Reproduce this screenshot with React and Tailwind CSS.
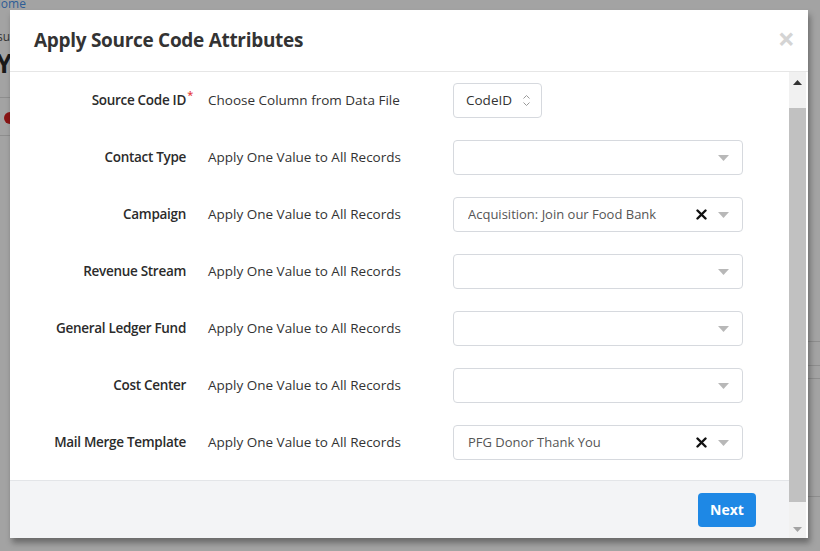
import React from 'react';

const rows = [
   { label: 'Source Code ID', required: true, mode: 'Choose Column from Data File', kind: 'code', value: 'CodeID' },
   { label: 'Contact Type', mode: 'Apply One Value to All Records', kind: 'select', value: '' },
   { label: 'Campaign', mode: 'Apply One Value to All Records', kind: 'select', value: 'Acquisition: Join our Food Bank' },
   { label: 'Revenue Stream', mode: 'Apply One Value to All Records', kind: 'select', value: '' },
   { label: 'General Ledger Fund', mode: 'Apply One Value to All Records', kind: 'select', value: '' },
   { label: 'Cost Center', mode: 'Apply One Value to All Records', kind: 'select', value: '' },
   { label: 'Mail Merge Template', mode: 'Apply One Value to All Records', kind: 'select', value: 'PFG Donor Thank You' },
];

function Caret() {
   return (
      <svg width="11" height="6" viewBox="0 0 11 6" className="shrink-0">
         <path d="M0 0 L11 0 L5.5 6 Z" fill="#b8b8b8" />
      </svg>
   );
}

function Select({ value }) {
   return (
      <div className="w-[290px] h-[35px] border border-[#d6d9de] rounded-[4px] bg-white flex items-center pl-[14px] pr-[13px]">
         <span className="flex-1 text-[13px] text-[#555] truncate">{value}</span>
         {value && (
            <svg width="11" height="11" viewBox="0 0 11 11" className="mr-[11px]">
               <path d="M1.5 1.5 L9.5 9.5 M9.5 1.5 L1.5 9.5" stroke="#111" strokeWidth="2.4" strokeLinecap="round" />
            </svg>
         )}
         <Caret />
      </div>
   );
}

function CodeSelect({ value }) {
   return (
      <div className="w-[89px] h-[35px] border border-[#d6d9de] rounded-[4px] bg-white flex items-center pl-[12px] pr-[10px]">
         <span className="flex-1 text-[13.5px] text-[#333]">{value}</span>
         <svg width="9" height="13" viewBox="0 0 9 13">
            <path d="M1.5 4.5 L4.5 1.5 L7.5 4.5 M1.5 8.5 L4.5 11.5 L7.5 8.5" stroke="#9a9a9a" strokeWidth="1" fill="none" />
         </svg>
      </div>
   );
}

export default function App() {
   return (
      <div className="relative w-[820px] h-[551px] overflow-hidden bg-[#a3a3a3]" style={{ fontFamily: '"Open Sans", "Noto Sans", sans-serif' }}>
         {/* page behind the overlay */}
         <div className="absolute left-[-8px] top-[-5px] text-[12px] text-[#2d5d96]">Home</div>
         <div className="absolute left-[-3px] top-[28px] text-[12px] text-[#333]">su</div>
         <div className="absolute left-[-4px] top-[44px] text-[26px] font-bold text-[#1a1a1a]">Yo</div>
         <div className="absolute left-0 top-[97px] w-[10px] h-px bg-[#8e8e8e]" />
         <div className="absolute left-[4px] top-[112px] w-[12px] h-[12px] rounded-full bg-[#8a1414]" />
         <div className="absolute left-0 top-[135px] w-[10px] h-px bg-[#8e8e8e]" />
         <div className="absolute right-0 top-[341px] w-[12px] h-px bg-[#8e8e8e]" />
         <div className="absolute right-0 top-[365px] w-[12px] h-px bg-[#8e8e8e]" />
         <div className="absolute right-0 top-[378px] w-[12px] h-px bg-[#8e8e8e]" />
         <div className="absolute right-0 top-[496px] w-[12px] h-px bg-[#8e8e8e]" />

         {/* modal */}
         <div className="absolute left-[10px] top-[10px] w-[798px] h-[528px] bg-white flex flex-col shadow-[2px_5px_6px_rgba(0,0,0,0.35)]">
            <div className="h-[62px] shrink-0 border-b border-[#e6e6e6] flex items-center justify-between pl-[24px] pr-[13px]">
               <h2 className="text-[19px] font-bold text-[#333] tracking-[-0.3px]">Apply Source Code Attributes</h2>
               <span className="text-[30px] leading-none font-bold text-[#d4d4d4] mb-[4px]">×</span>
            </div>

            <div className="flex flex-1 min-h-0">
               <div className="flex-1 flex flex-col">
                  <div className="flex-1">
                     {rows.map((r) => (
                        <div key={r.label} className="h-[57px] flex items-center">
                           <div className="w-[176px] text-right text-[13.5px] font-semibold tracking-[-0.3px] text-[#2b2b2b] relative">
                              {r.label}
                              {r.required && <span className="absolute right-[-7px] top-[-3px] text-[11px] text-[#e53e3e]">*</span>}
                           </div>
                           <div className="w-[267px] pl-[22px] text-[13.5px] text-[#333] whitespace-nowrap">{r.mode}</div>
                           {r.kind === 'code' ? <CodeSelect value={r.value} /> : <Select value={r.value} />}
                        </div>
                     ))}
                  </div>
                  <div className="h-[58px] shrink-0 border-t border-[#e3e5e8] bg-[#f3f4f6] flex items-center justify-end pr-[33px]">
                     <button className="w-[58px] h-[34px] rounded-[4px] bg-[#1e88e5] text-white text-[14px] font-bold">Next</button>
                  </div>
               </div>

               {/* scrollbar */}
               <div className="w-[17px] mr-[2px] bg-[#f1f1f1] flex flex-col">
                  <div className="h-[18px] flex items-center justify-center pt-[2px]">
                     <svg width="9" height="5" viewBox="0 0 9 5"><path d="M0 5 L9 5 L4.5 0 Z" fill="#333" /></svg>
                  </div>
                  <div className="flex-1 mt-[18px] mb-[18px] bg-[#c1c1c1]" />
                  <div className="h-[18px] flex items-center justify-center">
                     <svg width="9" height="5" viewBox="0 0 9 5"><path d="M0 0 L9 0 L4.5 5 Z" fill="#a3a3a3" /></svg>
                  </div>
               </div>
            </div>
         </div>
      </div>
   );
}
